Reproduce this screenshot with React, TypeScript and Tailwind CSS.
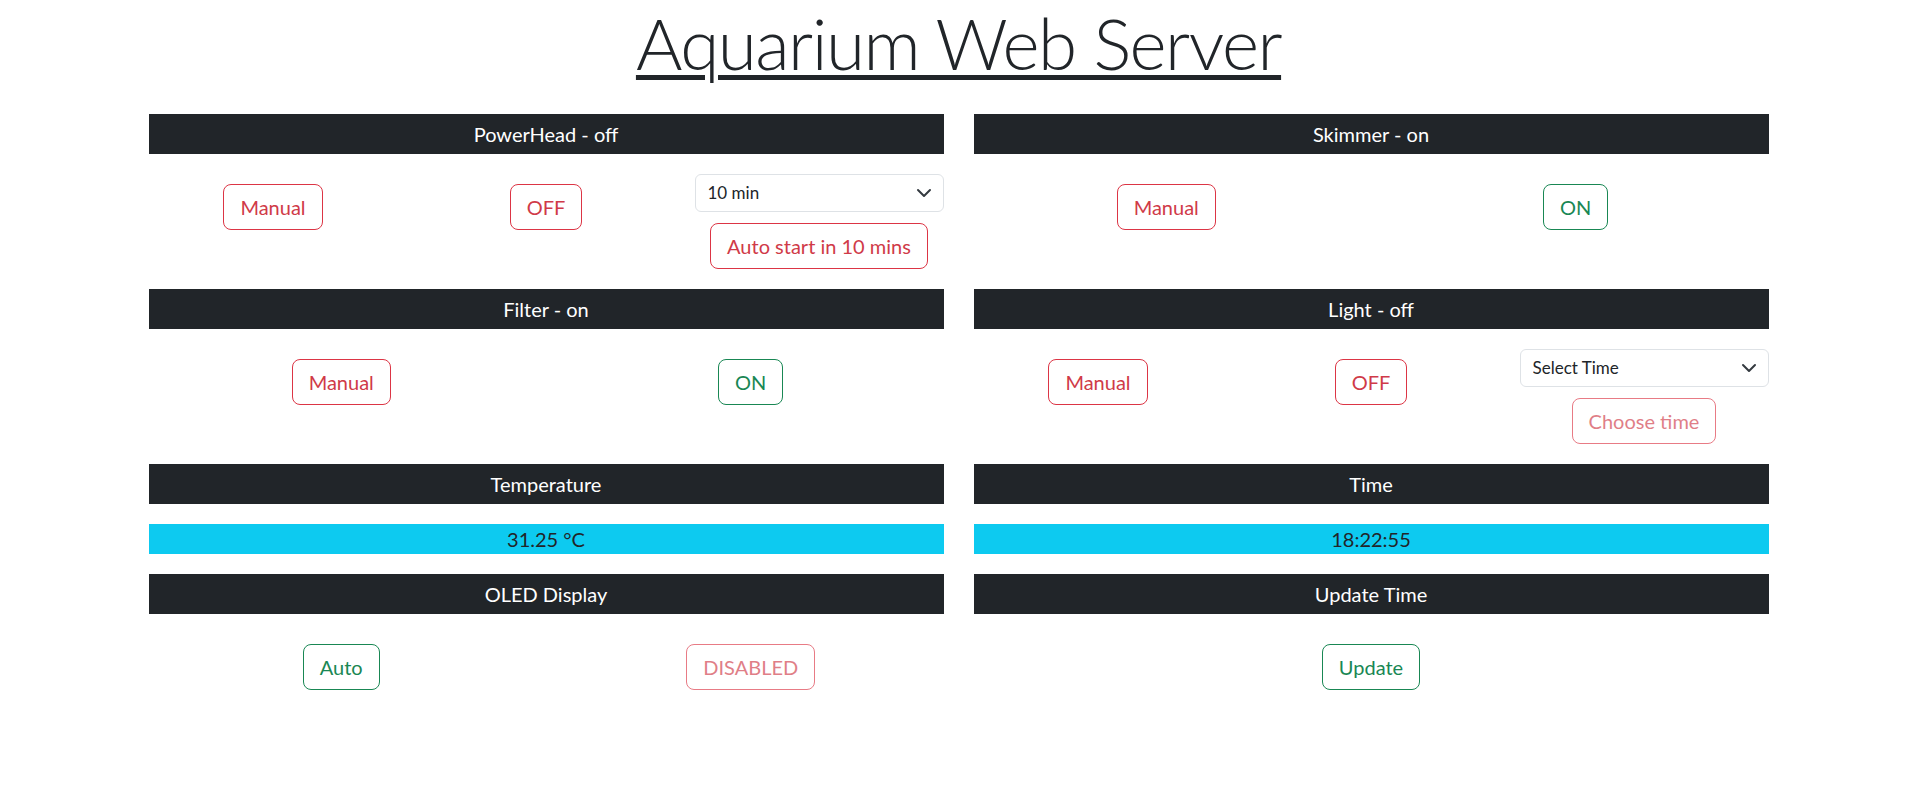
import React from "react";

const font = { fontFamily: "Lato, 'Noto Sans', sans-serif" };

function Header({ title }: { title: string }) {
    return (
        <div className="bg-[#212529] py-2 text-center text-[20px] leading-[24px] text-white">
            {title}
        </div>
    );
}

function Btn({ label, green, disabled, top }: { label: string; green?: boolean; disabled?: boolean; top?: boolean }) {
    return (
        <button
            disabled={disabled}
            className={
                "inline-block rounded-[8px] border bg-white px-4 py-[7px] text-[20px] leading-[30px] " +
                (green ? "border-[#198754] text-[#198754] " : "border-[#dc3545] text-[#d03a48] ") +
                (disabled ? "opacity-65 " : "") +
                (top ? "mt-[10px]" : "")
            }
        >
            {label}
        </button>
    );
}

function TimeSelect({ value }: { value: string }) {
    return (
        <div className="relative">
            <select
                defaultValue={value}
                className="block w-full appearance-none rounded-[6px] border border-[#dee2e6] bg-white py-[6px] pl-3 pr-9 text-[17px] leading-[24px] text-[#212529]"
            >
                <option>{value}</option>
            </select>
            <svg
                className="pointer-events-none absolute right-3 top-[13px]"
                width="16"
                height="12"
                viewBox="0 2 16 12"
                fill="none"
                stroke="#343a40"
                strokeWidth="2"
                strokeLinecap="round"
                strokeLinejoin="round"
            >
                <path d="m2 5 6 6 6-6" />
            </svg>
        </div>
    );
}

function Cell({ children }: { children: React.ReactNode }) {
    return <div className="px-3 text-center">{children}</div>;
}

export default function App() {
    return (
        <div className="min-h-screen bg-white text-[#212529]" style={font}>
            <h1 className="mb-[28px] text-center text-[71px] font-light leading-[86px] tracking-[-1.5px] underline decoration-[5px] underline-offset-[5px]">
                Aquarium Web Server
            </h1>

            <div className="mx-auto grid w-[1620px] grid-cols-2 gap-x-[30px]">
                {/* powerhead */}
                <div>
                    <Header title="PowerHead - off" />
                    <div className="-mx-3 grid grid-cols-3 py-5">
                        <Cell><Btn label="Manual" top /></Cell>
                        <Cell><Btn label="OFF" top /></Cell>
                        <Cell>
                            <TimeSelect value="10 min" />
                            <div className="mt-[11px]">
                                <Btn label="Auto start in 10 mins" />
                            </div>
                        </Cell>
                    </div>
                </div>

                {/* skimmer */}
                <div>
                    <Header title="Skimmer - on" />
                    <div className="-mx-3 grid grid-cols-2 py-5">
                        <Cell><Btn label="Manual" top /></Cell>
                        <Cell><Btn label="ON" green top /></Cell>
                    </div>
                </div>

                {/* filter */}
                <div>
                    <Header title="Filter - on" />
                    <div className="-mx-3 grid grid-cols-2 py-5">
                        <Cell><Btn label="Manual" top /></Cell>
                        <Cell><Btn label="ON" green top /></Cell>
                    </div>
                </div>

                {/* light */}
                <div>
                    <Header title="Light - off" />
                    <div className="-mx-3 grid grid-cols-3 py-5">
                        <Cell><Btn label="Manual" top /></Cell>
                        <Cell><Btn label="OFF" top /></Cell>
                        <Cell>
                            <TimeSelect value="Select Time" />
                            <div className="mt-[11px]">
                                <Btn label="Choose time" disabled />
                            </div>
                        </Cell>
                    </div>
                </div>

                <div>
                    <Header title="Temperature" />
                    <div className="my-5 bg-[#0dcaf0] text-center text-[20px] leading-[30px]">31.25 °C</div>
                </div>

                <div>
                    <Header title="Time" />
                    <div className="my-5 bg-[#0dcaf0] text-center text-[20px] leading-[30px]">18:22:55</div>
                </div>

                <div>
                    <Header title="OLED Display" />
                    <div className="-mx-3 grid grid-cols-2 py-5">
                        <Cell><Btn label="Auto" green top /></Cell>
                        <Cell><Btn label="DISABLED" disabled top /></Cell>
                    </div>
                </div>

                <div>
                    <Header title="Update Time" />
                    <div className="py-5 text-center">
                        <Btn label="Update" green top />
                    </div>
                </div>
            </div>
        </div>
    );
}
